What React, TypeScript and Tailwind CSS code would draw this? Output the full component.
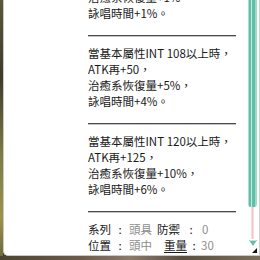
import React from "react";

const Sep = () => (
  <div className="mt-[14px] mb-[8px] h-[2px] border-t border-[#4a4a4a] border-b border-b-[#c4c4c4]" />
);

const Line = ({ children }: { children: React.ReactNode }) => (
  <div className="h-[16px] leading-[16px] whitespace-nowrap">{children}</div>
);

export default function App() {
  return (
    <div className="w-[260px] h-[260px] overflow-hidden flex flex-col bg-[#3d3a2a] font-['Liberation_Sans_Narrow','Noto_Sans_CJK_TC',sans-serif] text-[11.5px] text-[#1a1a1a]">
      <div className="flex h-[256px]">
        <div className="w-[3px] bg-[linear-gradient(to_bottom,#5b5838,#3f3b2c_30%,#7d7a45_60%,#9a9448_85%,#6e6a3c)]" />
        <div className="flex-1 flex bg-white border-l border-b border-[#c9c9c9] rounded-bl-[5px] overflow-hidden">
          <div className="w-[84px] shrink-0" />
          <div className="w-[148px] shrink-0 overflow-hidden">
            <div className="mt-[-11px]">
              <Line>治癒系恢復量+1%，</Line>
              <Line>詠唱時間+1%。</Line>
              <Sep />
              <Line>當基本屬性INT 108以上時，</Line>
              <Line>ATK再+50，</Line>
              <Line>治癒系恢復量+5%，</Line>
              <Line>詠唱時間+4%。</Line>
              <Sep />
              <Line>當基本屬性INT 120以上時，</Line>
              <Line>ATK再+125，</Line>
              <Line>治癒系恢復量+10%，</Line>
              <Line>詠唱時間+6%。</Line>
              <Sep />
              <div className="flex h-[16px] leading-[16px] whitespace-nowrap">
                <span>系列</span>
                <span className="w-[18px] text-center">:</span>
                <span className="text-[#8c8c8c]">頭具</span>
                <span className="ml-[5px]">防禦</span>
                <span className="w-[22px] text-center">:</span>
                <span className="text-[#8c8c8c]">0</span>
              </div>
              <div className="flex h-[16px] leading-[16px] whitespace-nowrap">
                <span>位置</span>
                <span className="w-[18px] text-center">:</span>
                <span className="text-[#8c8c8c]">頭中</span>
                <span className="ml-[12px] underline underline-offset-2">重量</span>
                <span className="w-[14px] text-center">:</span>
                <span className="text-[#8c8c8c]">30</span>
              </div>
            </div>
          </div>
          <div className="flex-1" />
          <div className="w-[9px] shrink-0 flex flex-col">
            <div className="h-[207px] rounded-b-[3px] bg-[linear-gradient(to_right,#a9ddd0_0,#a9ddd0_11%,#5fbfa7_11%,#5fbfa7_33%,#c5ebe1_33%,#c5ebe1_44%,#5fbfa7_44%,#5fbfa7_78%,#9fd8c9_78%)]" />
            <div className="flex-1 flex justify-center">
              <div className="w-[3px] bg-[#f9dde3] flex justify-center">
                <div className="w-[1px] bg-[#f2c3cd]" />
              </div>
            </div>
            <div className="h-[7px] flex justify-center mt-[1px]">
              <svg width="8" height="6" viewBox="0 0 8 6">
                <polygon points="0,0 8,0 4,6" fill="#5fbfa7" />
                <polygon points="1,0 7,0 7,1 1,1" fill="#bfe6dc" />
              </svg>
            </div>
            <div className="h-[8px] flex justify-end items-end pb-[2px] pt-[1px]">
              <svg width="5" height="5" viewBox="0 0 5 5">
                <polygon points="5,0 5,5 0,5" fill="#111" />
              </svg>
            </div>
          </div>
          <div className="w-[2px] shrink-0" />
          <div className="w-[1px] shrink-0 bg-[#d0d0d0]" />
        </div>
      </div>
      <div className="flex-1 bg-[linear-gradient(to_right,#4a4530,#6b5a4a_30%,#8a7a6a_50%,#5a5040_70%,#7a6f5a)]" />
    </div>
  );
}
